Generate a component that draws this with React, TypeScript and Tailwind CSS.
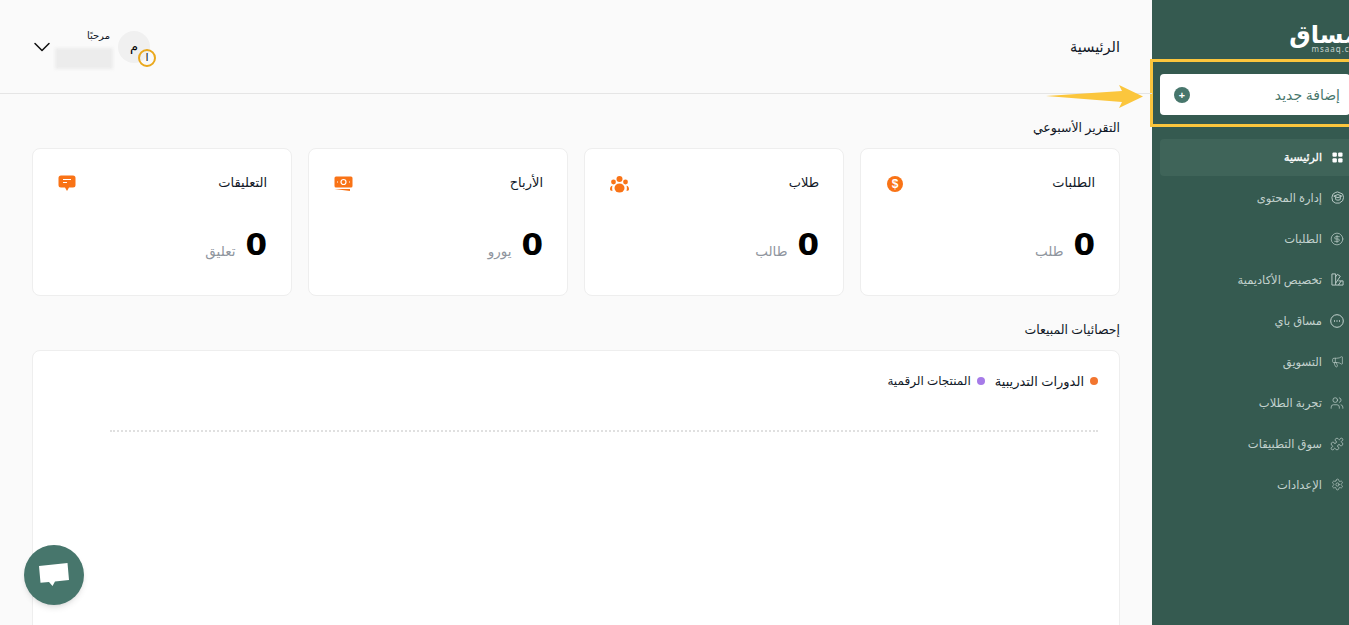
import { ChevronDown, CircleDollarSign, Megaphone, Puzzle, Settings, Users } from 'lucide-react'
import type { ReactNode } from 'react'

function GridIcon() {
  return (
    <svg width="11" height="11" viewBox="0 0 12 12" fill="currentColor">
      <rect x="0.5" y="0.5" width="4.8" height="4.8" rx="1.2" />
      <rect x="6.7" y="0.5" width="4.8" height="4.8" rx="1.2" />
      <rect x="0.5" y="6.7" width="4.8" height="4.8" rx="1.2" />
      <rect x="6.7" y="6.7" width="4.8" height="4.8" rx="1.2" />
    </svg>
  )
}

function ContentIcon() {
  return (
    <svg width="13" height="13" viewBox="0 0 14 14" fill="none" stroke="currentColor" strokeWidth="1">
      <path d="M4.5 1.8 7 1l5.5 2.2 1 3.8-1 3.5L9 13H5L1.8 11 1 7l1-3.5z" />
      <path d="M3 5.5 7.5 3.8 11.5 5.5 7.5 7.2zM5 6.5v2.6c1.5 1 3.5 1 5 0V6.5" />
    </svg>
  )
}

function BrushIcon() {
  return (
    <svg width="13" height="13" viewBox="0 0 14 14" fill="none" stroke="currentColor" strokeWidth="1">
      <path d="M1 1h4v12H1zM5 4l2-2.500 3 2L5 11M5 13h8V8.500H8" />
      <path d="M8 13l3-4.500" />
    </svg>
  )
}

function PayIcon() {
  return (
    <svg width="14" height="14" viewBox="0 0 14 14" fill="none" stroke="currentColor" strokeWidth="1">
      <circle cx="7" cy="7" r="6.300" />
      <path d="M4 7h1M6.500 7h1M9 7h1" strokeWidth="1.400" />
    </svg>
  )
}

const NAV_ITEMS: Array<{ label: string; icon: ReactNode }> = [
  { label: 'إدارة المحتوى', icon: <ContentIcon /> },
  { label: 'الطلبات', icon: <CircleDollarSign size={14} strokeWidth={1.2} /> },
  { label: 'تخصيص الأكاديمية', icon: <BrushIcon /> },
  { label: 'مساق باي', icon: <PayIcon /> },
  { label: 'التسويق', icon: <Megaphone size={13} strokeWidth={1.2} /> },
  { label: 'تجربة الطلاب', icon: <Users size={14} strokeWidth={1.2} /> },
  { label: 'سوق التطبيقات', icon: <Puzzle size={14} strokeWidth={1.2} /> },
  { label: 'الإعدادات', icon: <Settings size={13} strokeWidth={1.2} /> },
]

function DollarBadge() {
  return (
    <span className="flex h-4 w-4 items-center justify-center rounded-full bg-[#f97316] font-['Liberation_Sans'] text-[12px] font-bold leading-none text-white">$</span>
  )
}

function StudentsIcon() {
  return (
    <svg width="19" height="17" viewBox="0 0 19 17" fill="#f97316">
      <circle cx="9.500" cy="3" r="3" />
      <circle cx="3.500" cy="6" r="2.400" />
      <circle cx="15.500" cy="6" r="2.400" />
      <ellipse cx="9.500" cy="12" rx="5" ry="4.500" />
      <path d="M0 13c0-2 1-3 2.500-3.200C2 11 2 13 2.500 15 1 14.800 0 14.500 0 13zM19 13c0-2-1-3-2.500-3.200.5 1.200.5 3.200 0 5.200 1.500-.2 2.500-.5 2.500-2z" />
    </svg>
  )
}

function MoneyIcon() {
  return (
    <svg width="19" height="16" viewBox="0 0 19 16">
      <rect x="0.500" y="0.500" width="18" height="11" rx="1.500" fill="#f97316" />
      <circle cx="9.500" cy="6" r="2.500" fill="none" stroke="#fff" strokeWidth="1.200" />
      <path d="M3 6h1M15 6h1" stroke="#fff" />
      <path d="M0.500 13h15.500v2z" fill="#f97316" />
    </svg>
  )
}

function CommentIcon() {
  return (
    <svg width="18" height="18" viewBox="0 0 18 18">
      <path d="M3 0.500h12a2.500 2.500 0 0 1 2.500 2.500v7a2.500 2.500 0 0 1-2.500 2.500h-4L9 16l-2-3.500H3A2.500 2.500 0 0 1 .5 10V3A2.500 2.500 0 0 1 3 .5z" fill="#f97316" />
      <path d="M5 4.500h8M5 7.500h4" stroke="#fff" strokeWidth="1.200" />
    </svg>
  )
}

const STATS: Array<{ title: string; unit: string; icon: ReactNode }> = [
  { title: 'الطلبات', unit: 'طلب', icon: <DollarBadge /> },
  { title: 'طلاب', unit: 'طالب', icon: <StudentsIcon /> },
  { title: 'الأرباح', unit: 'يورو', icon: <MoneyIcon /> },
  { title: 'التعليقات', unit: 'تعليق', icon: <CommentIcon /> },
]

function StatCard({ title, unit, icon }: { title: string; unit: string; icon: ReactNode }) {
  return (
    <div className="h-[148px] rounded-lg border border-[#eeeeee] bg-white px-6 pt-[24px]">
      <div className="flex h-[20px] items-center justify-between">
        <span className="text-[13px] text-[#111827]">{title}</span>
        <span className="mt-[2px] flex w-[20px] justify-center">{icon}</span>
      </div>
      <div className="mt-[31px] flex items-center gap-[10px]">
        <span className="font-['DejaVu_Sans'] text-[31px] font-bold leading-[40px] text-black">0</span>
        <span className="mt-[14px] text-[13.5px] text-[#8f959e]">{unit}</span>
      </div>
    </div>
  )
}

export default function App() {
  return (
    <div dir="rtl" className="relative flex h-[625px] w-[1349px] overflow-hidden bg-[#fafafa] font-['Noto_Sans','DejaVu_Sans',sans-serif]">
      <aside className="flex h-full w-[197px] shrink-0 flex-col bg-[#355a50]">
        <div className="flex h-[59px] flex-col items-start overflow-hidden pt-[22px]">
          <div className="mr-[-10px] text-[24px] font-bold leading-[24px] text-white">مساق</div>
          <div className="mr-[-15px] text-[8px] leading-[6px] tracking-[1px] text-[#c8d5d1]" dir="ltr">msaaq.com</div>
        </div>
        <div className="mr-[-4px] h-[68px] w-[203px] border-[3px] border-[#fbc63d] py-[12px] pl-[7px]">
          <div className="flex h-[41px] items-center justify-between rounded bg-white pr-[10px] pl-[14px]">
            <span className="text-[14px] text-[#47766c]">إضافة جديد</span>
            <span className="flex h-4 w-4 items-center justify-center rounded-full bg-[#47766c] text-[11px] font-bold leading-none text-white">+</span>
          </div>
        </div>
        <nav className="mt-[12px] flex flex-col pr-[5px] pl-2">
          <div className="mr-[-20px] flex h-[37px] items-center gap-[10px] rounded bg-[#3f6459] pr-[21px] text-[11px] text-white [-webkit-text-stroke:0.3px_white]">
            <GridIcon />
            <span>الرئيسية</span>
          </div>
          <div className="mt-[1px] flex flex-col">
            {NAV_ITEMS.map(item => (
              <div key={item.label} className="flex h-[41px] items-center gap-[8px] text-[11.5px] text-[#c3d2ce]">
                <span className="flex w-[14px] justify-center">{item.icon}</span>
                <span>{item.label}</span>
              </div>
            ))}
          </div>
        </nav>
      </aside>

      <main className="min-w-0 flex-1">
        <header className="flex h-[94px] items-center justify-between border-b border-[#e5e5e5] pr-8 pl-[28px]">
          <h1 className="text-[14.5px] font-medium text-[#111827]">الرئيسية</h1>
          <div className="flex items-center gap-[5px]">
            <div className="relative h-8 w-8 rounded-full bg-[#f0f0f0]">
              <span className="absolute inset-0 flex items-center justify-center text-[13px] text-black">م</span>
              <span className="absolute top-[18px] left-[20px] flex h-[18px] w-[18px] items-center justify-center rounded-full border-2 border-[#eaa81c] text-[11px] text-[#111827]">ا</span>
            </div>
            <div className="mt-[4px] flex w-[58px] flex-col">
              <span className="pr-[3px] text-[10px] leading-[12px] text-[#111827]">مرحبًا</span>
              <span className="mt-[7px] h-[21px] w-[58px] bg-[#ececec] blur-[1.5px]" />
            </div>
            <ChevronDown size={28} strokeWidth={1.300} className="mr-[-6px] text-[#111]" />
          </div>
        </header>

        <section className="px-8">
          <h2 className="mt-[24px] text-[12.5px] leading-[20px] text-[#111827]">التقرير الأسبوعي</h2>
          <div className="mt-[10px] grid grid-cols-4 gap-4">
            {STATS.map(stat => (
              <StatCard key={stat.title} {...stat} />
            ))}
          </div>
          <h2 className="mt-[24px] text-[12.5px] leading-[20px] text-[#111827]">إحصائيات المبيعات</h2>
          <div className="mt-[10px] h-[320px] rounded-lg border border-[#eeeeee] bg-white px-[21px] pt-[20px]">
            <div className="flex items-center gap-[10px] text-[13px] leading-[20px] text-[#111827]">
              <span className="flex items-center gap-[6px]">
                <span className="h-2 w-2 rounded-full bg-[#f2752f]" />
                الدورات التدريبية
              </span>
              <span className="flex items-center gap-[6px] text-[12px]">
                <span className="h-2 w-2 rounded-full bg-[#a67be8]" />
                المنتجات الرقمية
              </span>
            </div>
            <div className="mt-[39px] ml-[56px] border-t-2 border-dotted border-[#e0e0e0]" />
          </div>
        </section>
      </main>

      <svg className="absolute top-[84px] left-[1046px]" width="98" height="25" viewBox="0 0 98 25">
        <path d="M0 12 76 7 73 1l24 11.500L73 24l3-6z" fill="#fbc63d" />
      </svg>

      <button type="button" className="absolute top-[545px] left-[24px] flex h-[60px] w-[60px] items-center justify-center rounded-full bg-[#47766c] shadow-md">
        <svg width="30" height="26" viewBox="0 0 30 26" fill="#fff">
          <path d="M0 4 28.500 1 30 18 16 19.500 13.500 24 10 20 1.500 20.800z" />
        </svg>
      </button>
    </div>
  )
}
